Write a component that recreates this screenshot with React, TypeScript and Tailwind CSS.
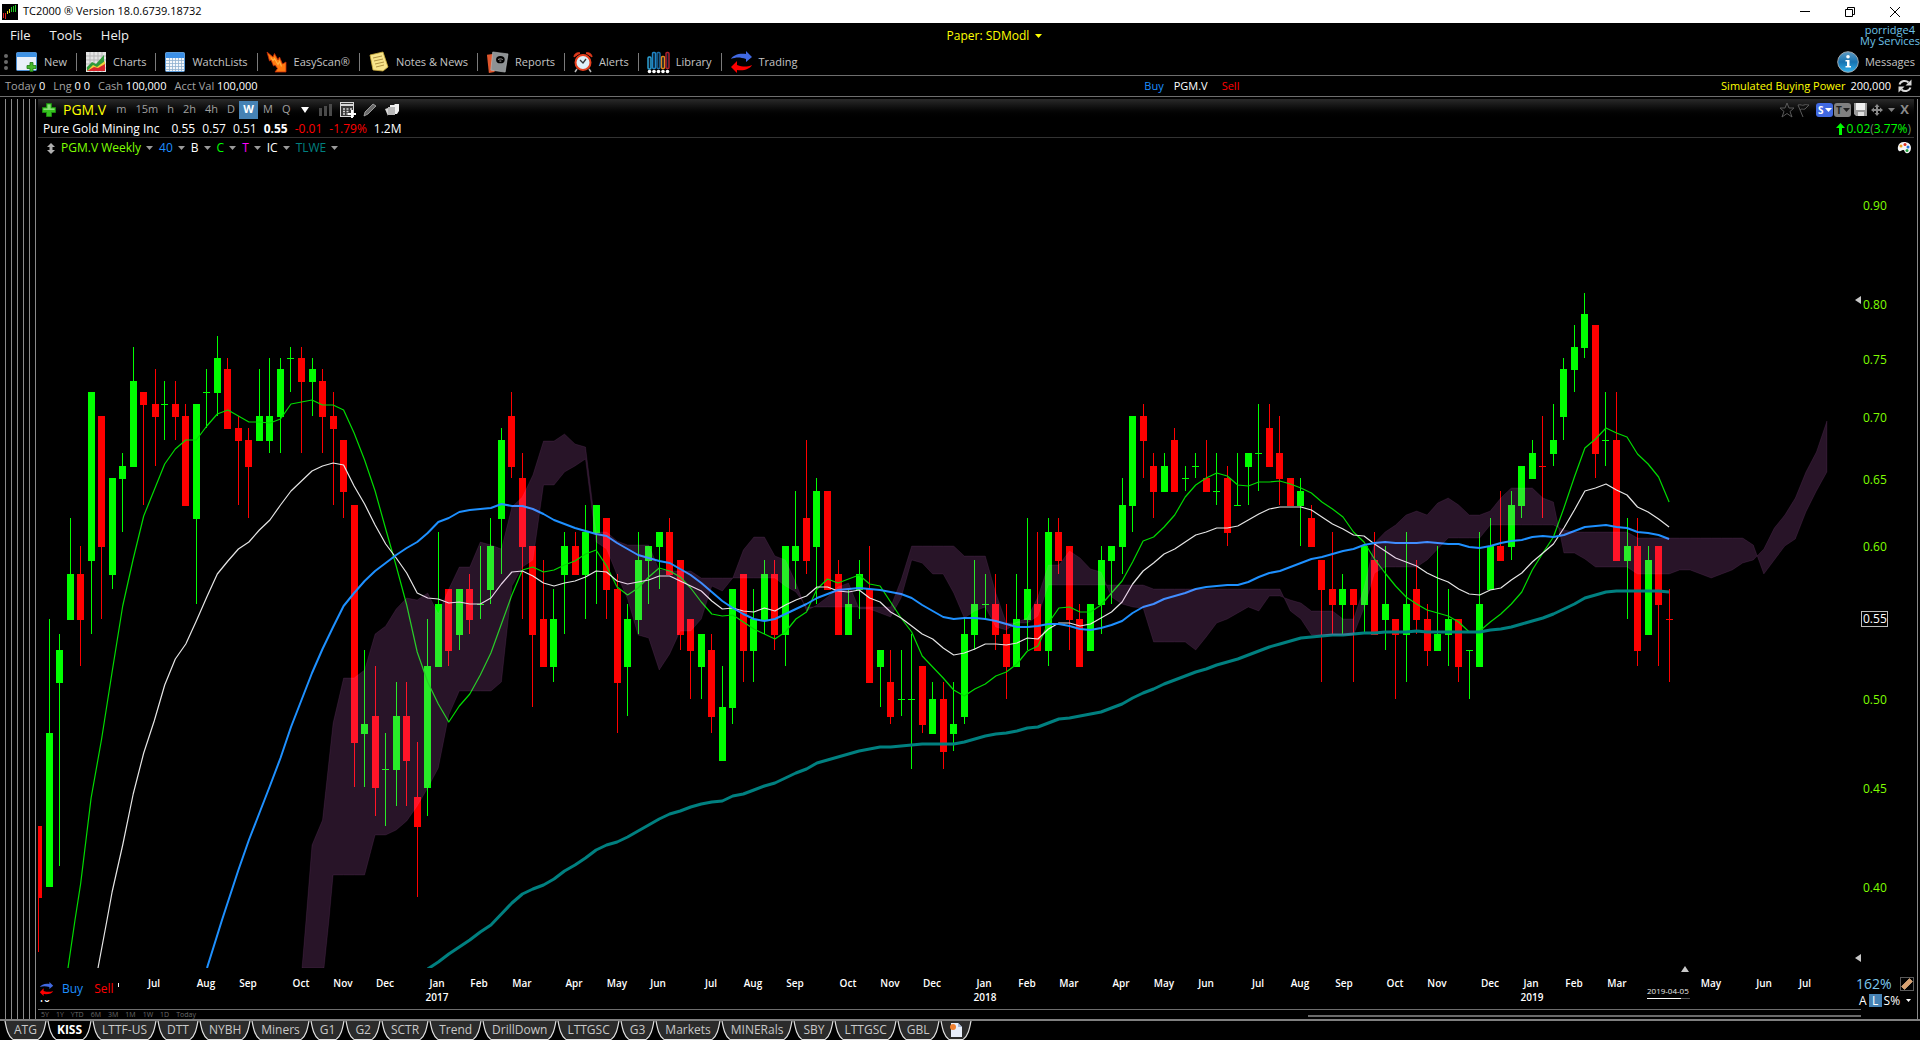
import React from "react";

/* ---------- chart data ---------- */

// One weekly bar per entry: direction (u/d), high, body top, body bottom, low, in cents.
const BARS = `
d 43 43 39.5 37|u 55 48 40 40|u 54 53 51 41|u 62 58 55 55|d 60 58 55 52|u 72 72 59 54|d 70 70 60 55|u 65 65 58 57|u 67 66 65 61|u 76 73 66 66|
d 72 72 71 63|d 74 71 70 66|u 73 71 71 68|d 73 71 70 68|d 71 70 63 63|u 71 71 62 56|u 74 72 72 69|u 77 75 72 70|d 75 74 69 69|d 70 69 68 63|
d 69 68 66 62|u 74 70 68 68|u 75 70 68 67|u 75 74 70 67|u 76 75 75 72|d 76 75 73 67|u 75 74 73 70|d 74 73 70 67|d 72 70 69 63|d 68 68 64 62|
d 63 63 47.5 45|u 53 48.5 48 45|d 52 49 45 43.5|u 48 46 46 43|u 51 49 46 44|d 51 49 46.5 44|d 47.5 44.5 43 39.5|u 55 52 45 43.5|u 61 56 52 52|d 57 57 53 52|
u 57 57 54 53|d 58 57 55 54|u 60 56 56 55|u 62 60 57 56|u 69 68 62 58|d 72 70 66 65|d 67 65 60 55|d 60 60 54 49.5|d 59 55 52 52|u 57 55 52 51|
u 61 60 58 54|d 61 60 58 58|u 63 61 58 55|u 63 63 61 56|d 62 62 57 55|d 58 57 51 48|u 56 55 52 49|u 61 59 55 54|u 60 60 59 56|u 61 61 60 57|
d 62 61 58 58|d 59 59 54 53|d 55 55 53 50|u 54 54 52 50|d 54 53 49 48|u 52 49.5 46.5 46.5|u 57 57 49.5 48.5|d 58 58 53 51|u 57 55 53 51|u 59 58 55 54|
d 59 58 54 53|u 60 60 54 52|u 64 60 59 57|d 68 62 59 58|u 65 64 60 56|d 64 64 57 57|d 59 58 54 54|u 57 56 54 54|u 59 58 57 55|d 60 57 51 51|
u 53 53 52 49.5|d 53 51 49 48.5|u 53 50 50 49|u 54 50 50 46|d 52 52 48.5 48|u 51 50 48 48|d 51 50 47 46|u 51 48.5 48 47|u 55 54 49 48.5|u 59 56 54 53|
u 58 56 56 55|d 58 56 54 53|d 56 54 52 50|u 58 55 52 52|u 62 57 55 53|d 61 56 53 53|u 62 61 53 52|d 62 61 59 58|d 60 60 55 53|d 56 55 52 52|
u 56 56 53 53|u 60 59 56 54|u 60 60 59 56|u 65 63 60 58|u 70 70 63 61|d 71 70 68 65|d 67 66 64 62|u 67 66 64 64|d 69 68 64 64|u 66 65 65 64|
u 67 66 66 65|d 68 65 64 64|u 67 64 64 63|d 66 65 61 60|u 67 63 63 63|u 67 67 66 63|u 71 67 67 64|d 71 69 66 66|d 70 67 65 63|d 65 65 63 63|
u 65 64 63 60|d 63 62 60 60|d 59 59 57 51|d 61 57 56 54|u 58 57 56 54|d 57 57 56 51|u 60 60 56 54|d 61 59 54 54|u 60 56 55 53|d 55 55 54 50|
u 61 56 54 51|d 59 57 55 54|d 56 55 53 52|u 60 54 53 53|u 57 55 54 52|d 55 55 52 51|u 53 53 53 50|u 61 56 52 52|u 62 60 57 57|d 64 60 59 59|
u 64 63 60 59|u 66 66 63 62|u 68 67 65 65|d 70 66 66 62|u 71 68 67 66|u 75 74 70 68|u 78 76 74 72|u 81 79 76 75|d 78 78 67 65|u 72 68 68 66|
d 72 68 59 59|u 62 60 59 55|d 62 60 53 52|u 60 59 54 54|d 60 60 56 52|d 57 55 55 51`
  .replace(/\n/g, "")
  .split("|")
  .map((row) => {
    const [dir, ...p] = row.split(" ");
    return { up: dir === "u", high: +p[0], top: +p[1], bottom: +p[2], low: +p[3] };
  });

const barX = (i: number) => 38.5 + 10.52 * i;
const priceY = (cents: number) => 304.4 + 840.4 * Math.log(80 / cents);

const FAST_START = 4;
const FAST = [
  884, 798, 739, 672, 606, 559, 516, 490, 464, 449, 440, 440, 426, 414, 410, 416, 422, 422, 423, 419, 404, 402, 400, 405, 405, 410,
  433, 460, 491, 529, 566, 605, 652, 682, 704, 722, 706, 694, 675, 653, 624, 595, 570, 567, 572, 570, 565, 561, 554, 550, 566, 587,
  595, 588, 577, 568, 571, 577, 588, 602, 614, 616, 615, 622, 629, 634, 639, 632, 619, 612, 589, 579, 583, 579, 575, 584, 586, 602,
  618, 632, 656, 667, 678, 690, 696, 689, 684, 676, 672, 664, 651, 646, 623, 608, 607, 612, 612, 605, 593, 581, 562, 541, 537, 527,
  515, 497, 485, 478, 473, 476, 485, 486, 482, 482, 481, 484, 488, 493, 502, 509, 517, 532, 542, 559, 573, 586, 597, 604, 610, 613,
  616, 622, 632, 631, 622, 614, 604, 592, 570, 553, 537, 508, 477, 448, 439, 428, 433, 437, 454, 464, 477, 502,
];

const MID_START = 7;
const MID = [
  892, 845, 794, 753, 721, 685, 659, 644, 621, 597, 574, 561, 549, 542, 530, 520, 505, 491, 481, 471, 466, 463, 465, 486, 504, 525,
  544, 558, 573, 593, 598, 599, 603, 602, 604, 604, 598, 584, 572, 571, 576, 583, 586, 583, 581, 577, 571, 572, 581, 584, 582, 580,
  576, 576, 581, 586, 591, 601, 609, 608, 611, 612, 608, 611, 605, 600, 596, 587, 587, 591, 592, 590, 598, 602, 612, 618, 626, 634,
  639, 648, 655, 653, 649, 644, 644, 645, 643, 638, 639, 629, 623, 623, 626, 624, 618, 612, 602, 584, 571, 563, 554, 549, 542, 535,
  532, 528, 528, 526, 520, 514, 509, 507, 507, 507, 510, 517, 524, 529, 535, 536, 544, 551, 558, 562, 566, 573, 578, 582, 589, 594,
  595, 590, 588, 580, 573, 562, 553, 544, 528, 510, 491, 488, 484, 490, 495, 507, 512, 519, 527,
];

const SLOW_START = 19;
const SLOW = [
  870, 840, 813, 786, 758, 727, 700, 673, 649, 627, 606, 593, 581, 571, 563, 555, 548, 542, 533, 522, 518, 512, 510, 509, 508, 504,
  506, 506, 509, 514, 520, 524, 528, 531, 534, 536, 543, 549, 555, 558, 561, 563, 569, 575, 583, 592, 601, 608, 614, 619, 621, 619,
  614, 609, 604, 598, 594, 590, 589, 588, 589, 590, 592, 594, 598, 605, 611, 617, 619, 618, 618, 619, 621, 624, 627, 627, 626, 624,
  624, 626, 629, 630, 628, 625, 621, 613, 607, 604, 599, 596, 593, 589, 587, 586, 585, 585, 582, 577, 573, 571, 567, 563, 559, 557,
  554, 551, 549, 545, 543, 542, 543, 543, 543, 542, 543, 544, 544, 547, 548, 546, 543, 541, 540, 537, 536, 537, 535, 531, 527, 526,
  525, 527, 528, 532, 533, 535, 539,
];

const LONG_START = 37;
const LONG = [
  969, 962, 954, 947, 940, 932, 925, 914, 903, 894, 889, 885, 879, 871, 865, 858, 850, 845, 842, 837, 831, 825, 819, 814, 811, 807,
  804, 802, 801, 796, 794, 790, 786, 783, 778, 773, 769, 763, 760, 757, 754, 751, 749, 747, 747, 746, 745, 744, 744, 744, 744, 742,
  739, 736, 734, 733, 731, 728, 727, 723, 719, 718, 716, 714, 712, 708, 704, 698, 693, 689, 684, 680, 676, 672, 669, 665, 662, 659,
  655, 651, 647, 644, 641, 638, 637, 636, 635, 635, 634, 633, 633, 632, 632, 632, 631, 632, 632, 632, 632, 632, 632, 630, 629, 627,
  624, 621, 618, 614, 609, 604, 598, 595, 592, 591, 591, 591, 591, 591, 592,
];

const SPAN_START = 26;
const SPAN_A = [
  845, 820, 723, 678, 678, 670, 634, 626, 609, 598, 600, 593, 614, 589, 567, 567, 542, 545, 549, 507, 497, 475, 441, 441, 434, 444,
  447, 532, 532, 541, 545, 545, 545, 570, 571, 571, 571, 578, 578, 578, 578, 550, 537, 537, 556, 560, 583, 611, 605, 597, 587, 583,
  609, 609, 613, 617, 598, 560, 563, 574, 574, 593, 618, 611, 607, 627, 630, 622, 618, 597, 565, 565, 551, 558, 569, 572, 597, 604,
  607, 608, 642, 642, 642, 642, 650, 637, 623, 619, 613, 607, 611, 596, 596, 600, 603, 611, 611, 611, 619, 619, 588, 543, 532, 525,
  515, 511, 515, 503, 498, 505, 515, 515, 511, 498, 488, 488, 488, 498, 502, 553, 553, 559, 567, 567, 567, 567, 574, 574, 574, 574,
  570, 570, 574, 578, 574, 570, 563, 560, 549, 528, 515, 498, 472, 452, 421,
];
const SPAN_B = [
  1010, 955, 875, 875, 875, 875, 835, 835, 830, 821, 806, 788, 768, 715, 691, 691, 691, 691, 682, 586, 567, 560, 485, 485, 472, 466,
  459, 542, 549, 575, 599, 635, 638, 670, 654, 631, 631, 619, 586, 591, 578, 578, 578, 578, 578, 586, 592, 607, 607, 607, 607, 607,
  607, 607, 607, 607, 580, 546, 546, 546, 546, 546, 556, 556, 556, 593, 623, 623, 623, 616, 585, 585, 585, 585, 585, 585, 585, 585,
  585, 585, 589, 589, 589, 589, 589, 589, 589, 589, 589, 589, 589, 589, 589, 611, 619, 635, 635, 635, 635, 635, 608, 573, 567, 567,
  567, 567, 560, 549, 538, 538, 538, 538, 525, 525, 525, 525, 525, 525, 525, 530, 532, 532, 532, 532, 532, 532, 538, 538, 538, 538,
  538, 538, 538, 538, 538, 538, 538, 545, 574, 560, 546, 539, 512, 491, 472,
];

const toPoints = (start: number, ys: number[]) => ys.map((y, k) => `${barX(start + k).toFixed(1)},${y}`);

const MONTHS: [string, number][] = [
  ["Jul", 154], ["Aug", 206], ["Sep", 248], ["Oct", 301], ["Nov", 343], ["Dec", 385], ["Jan", 437], ["Feb", 479], ["Mar", 522],
  ["Apr", 574], ["May", 617], ["Jun", 658], ["Jul", 711], ["Aug", 753], ["Sep", 795], ["Oct", 848], ["Nov", 890], ["Dec", 932],
  ["Jan", 984], ["Feb", 1027], ["Mar", 1069], ["Apr", 1121], ["May", 1164], ["Jun", 1206], ["Jul", 1258], ["Aug", 1300],
  ["Sep", 1344], ["Oct", 1395], ["Nov", 1437], ["Dec", 1490], ["Jan", 1531], ["Feb", 1574], ["Mar", 1617], ["May", 1711],
  ["Jun", 1764], ["Jul", 1805],
];
const YEARS: [string, number][] = [["2017", 437], ["2018", 985], ["2019", 1532]];
const PRICES = [90, 80, 75, 70, 65, 60, 50, 45, 40];

function PriceChart() {
  const cloud = [...toPoints(SPAN_START, SPAN_A), ...toPoints(SPAN_START, SPAN_B).reverse()].join(" ");
  return (
    <svg
      viewBox="38 158 1876 851"
      preserveAspectRatio="none"
      className="absolute inset-0 h-full w-full"
      role="img"
      aria-label="PGM.V weekly candlestick chart"
    >
      <defs>
        <clipPath id="plot">
          <rect x="38" y="158" width="1820" height="810" />
        </clipPath>
        <clipPath id="cut-year">
          <rect x="38" y="1000" width="30" height="6" />
        </clipPath>
      </defs>
      <g clipPath="url(#plot)">
        <g shapeRendering="crispEdges">
          {BARS.map((b, i) => {
            const x = i === 11 ? 155 : Math.floor(barX(i));
            const high = Math.floor(priceY(b.high));
            const low = Math.floor(priceY(b.low));
            const top = Math.floor(priceY(b.top));
            const bottom = Math.floor(priceY(b.bottom)) + 1;
            return (
              <g key={i} fill={b.up ? "#00ff00" : "#ff0000"}>
                <rect x={x} y={high} width={1} height={low - high} />
                <rect x={x - 3} y={top} width={7} height={bottom - top} />
              </g>
            );
          })}
        </g>
        <g fill="none" strokeLinejoin="round">
          <polyline points={["68,968", "75,920", ...toPoints(FAST_START, FAST)].join(" ")} stroke="#00dc00" strokeWidth="1.2" />
          <polyline points={["98,968", "107,920", ...toPoints(MID_START, MID)].join(" ")} stroke="#e6e6e6" strokeWidth="1.2" />
          <polyline points={["207,968", "222,920", ...toPoints(SLOW_START, SLOW)].join(" ")} stroke="#1e90ff" strokeWidth="2" />
          <polyline points={toPoints(LONG_START, LONG).join(" ")} stroke="#008080" strokeWidth="3" />
        </g>
        <polygon
          points={`302,968 306,920 ${cloud.split(" ").slice(0, -2).join(" ")} 329,920 324,968`}
          fill="#ff80ff"
          fillOpacity="0.157"
          stroke="#ff80ff"
          strokeOpacity="0.09"
        />
      </g>

      <g fill="#ffffff" fontSize="10" fontWeight="600" textAnchor="middle">
        {MONTHS.map(([m, x], i) => (
          <text key={i} x={x} y="987">
            {m}
          </text>
        ))}
        {YEARS.map(([t, x]) => (
          <text key={t} x={x} y="1001">
            {t}
          </text>
        ))}
        <text x="44" y="1002" clipPath="url(#cut-year)">
          16
        </text>
        <rect x="118" y="983" width="1" height="4" />
      </g>
      <g fill="#7fff00" fontSize="12" fontWeight="500">
        {PRICES.map((p) => (
          <text key={p} x="1863" y={Math.round(priceY(p)) + 5}>
            {(p / 100).toFixed(2)}
          </text>
        ))}
      </g>
      <rect x="1861.5" y="611.5" width="26" height="15" fill="#000000" stroke="#bdbdbd" />
      <text x="1863" y="623" fontSize="12" fontWeight="500" fill="#ffffff">
        0.55
      </text>
      <g fill="#c8c8c8">
        <path d="M1855 300l6-4v8z" />
        <path d="M1855 958l6-4v8z" />
        <path d="M1685 966l4 6h-8z" />
      </g>
      <text x="1647" y="994" fontSize="8" fill="#e8e8e8">
        2019-04-05
      </text>
      <g shapeRendering="crispEdges">
        <rect x="1647" y="998" width="43" height="1" fill="#555555" />
        <rect x="1647" y="998" width="34" height="1" fill="#ffffff" />
      </g>
    </svg>
  );
}

/* ---------- icons ---------- */

const icon = "h-[22px] w-[22px] shrink-0";

const NewIcon = () => (
  <svg viewBox="0 0 22 22" className={icon}>
    <rect x="0.5" y="1.5" width="20" height="18" rx="1" fill="#e9f0fa" stroke="#4a8fd6" />
    <rect x="1" y="2" width="19" height="4" fill="#3f92e4" />
    <path d="M14 11.500h3v3h3v3h-3v3h-3v-3h-3v-3h3z" fill="#46b92c" stroke="#1c7a12" strokeWidth="0.8" />
  </svg>
);
const ChartsIcon = () => (
  <svg viewBox="0 0 22 22" className={icon}>
    <rect x="1" y="1" width="20" height="20" fill="#e4e4e4" />
    <path d="M1 5h20M1 9h20M1 13h20M1 17h20M5 1v20M9 1v20M13 1v20M17 1v20" stroke="#b5b5b5" />
    <path d="M2 20v-4l5-5 4 2 8-9v16z" fill="#2f9a3a" />
    <path d="M2 20l6-6 4 2 8-6v10z" fill="#f2d03a" />
    <path d="M2 20l7-4 4 1 7-4v7z" fill="#d8242a" />
  </svg>
);
const WatchIcon = () => (
  <svg viewBox="0 0 22 22" className={icon}>
    <rect x="1.500" y="1.500" width="19" height="19" rx="1" fill="#f4f7fb" stroke="#5b9bd9" />
    <rect x="2" y="2" width="18" height="5" fill="#3b8fe6" />
    <path d="M2 9.500h18M2 12.500h18M2 15.500h18M2 18.500h18M5.500 7v13M8.500 7v13M11.500 7v13M14.500 7v13M17.500 7v13" stroke="#8fb0cf" strokeWidth="0.8" />
  </svg>
);
const ScanIcon = () => (
  <svg viewBox="0 0 22 22" className={icon}>
    <path d="M1 1l6 5 1.500-3.500L12 9l1.500-3 3 7 3.500-2v10H9l2.500-3.500L9 14l-1.500 1L5 9 3.500 10z" fill="#ff7a10" stroke="#c22a08" strokeWidth="0.8" />
    <path d="M5 6.500l2 3 1.500-2 3.500 6 1.500-3 2 5" stroke="#ffb040" strokeWidth="1.200" fill="none" />
  </svg>
);
const NotesIcon = () => (
  <svg viewBox="0 0 22 22" className={icon}>
    <path d="M2 4l13-3 5 15-5 4-10-1z" fill="#f7e48a" stroke="#c9a93b" strokeWidth="0.8" />
    <path d="M5 7l9-2M6 10l9-2M7 13l9-2M8 16l8-2" stroke="#a8893a" strokeWidth="0.9" />
  </svg>
);
const ReportsIcon = () => (
  <svg viewBox="0 0 24 24" className="h-[23px] w-[23px] shrink-0">
    <path d="M1 4l6-1 2 19-6 1z" fill="#e0562c" />
    <path d="M7 1l16 2-3 19-15-2z" fill="#8e9294" stroke="#c0c4c6" strokeWidth="0.6" />
    <ellipse cx="15" cy="9" rx="4.500" ry="3.800" fill="#000000" />
    <path d="M12.500 9c1-1 4-1 5 0M14 10.500h2" stroke="#c8c8c8" strokeWidth="0.8" fill="none" />
  </svg>
);
const AlertsIcon = () => (
  <svg viewBox="0 0 20 22" className="h-[22px] w-[20px] shrink-0">
    <path d="M1 6c0-3 3-5 6-4zM19 6c0-3-3-5-6-4z" fill="#e23a1c" stroke="#e23a1c" />
    <path d="M4 18l-2 3M16 18l2 3" stroke="#bcbcbc" strokeWidth="1.500" />
    <circle cx="10" cy="11.500" r="7.500" fill="#dff0f8" stroke="#e8401e" strokeWidth="2" />
    <path d="M7 9l3 3 3-4" stroke="#333333" strokeWidth="1.300" fill="none" />
  </svg>
);
const LibraryIcon = () => (
  <svg viewBox="0 0 23 23" className="h-[23px] w-[23px] shrink-0">
    <g fill="#0b1c2c" strokeWidth="1.400">
      <rect x="1" y="6" width="3" height="12" rx="1" stroke="#2fa8dc" />
      <rect x="5.500" y="1.500" width="3" height="16" rx="1" stroke="#1f86c8" />
      <rect x="10" y="1.500" width="3" height="16" rx="1" stroke="#1b6ea8" />
      <rect x="14.500" y="5.500" width="3" height="12" rx="1" stroke="#e08a1c" />
      <rect x="19" y="1.500" width="3" height="16" rx="1" stroke="#b3202c" />
    </g>
    <g fill="#ffffff">
      <circle cx="2.500" cy="20.500" r="1.800" />
      <circle cx="7" cy="20.500" r="1.800" />
      <circle cx="11.500" cy="20.500" r="1.800" />
      <circle cx="16" cy="20.500" r="1.800" />
      <circle cx="20.500" cy="20.500" r="1.800" />
    </g>
  </svg>
);
const TradeIcon = ({ className }: { className: string }) => (
  <svg viewBox="0 0 23 22" className={className}>
    <path d="M1 8c2-4 8-6 15-5v-3l6 6-6 5v-3c-6-2-10-2-15 0z" fill="#4169e1" />
    <path d="M22 14c-2 4-8 6-15 5v3l-6-6 6-6v4c6 2 10 2 15 0z" fill="#ff0000" />
  </svg>
);
const Caret = ({ className = "text-[#9a9a9a]" }: { className?: string }) => (
  <svg viewBox="0 0 7 4" className={`h-1 w-[7px] shrink-0 ${className}`}>
    <path d="M0 0h7L3.500 4z" fill="currentColor" />
  </svg>
);

/* ---------- window chrome ---------- */

function TitleBar() {
  return (
    <header className="flex h-[23px] items-center bg-white pl-[2px] text-[11px] text-black">
      <svg viewBox="0 0 16 16" className="h-4 w-4">
        <rect width="16" height="16" fill="#000000" />
        <path d="M1.500 9v5M3.500 9v6" stroke="#e02020" />
        <path d="M5.500 7v3M7.500 5v4" stroke="#e8d820" />
        <path d="M9.500 3v5M11.500 2v6M13.500 1v7" stroke="#20d020" />
      </svg>
      <h1 className="ml-[5px] flex-1">TC2000 ® Version 18.0.6739.18732</h1>
      <div className="flex h-full pr-[3px]">
        <button aria-label="Minimize" className="flex w-[45px] items-center justify-center">
          <svg viewBox="0 0 10 10" className="h-[10px] w-[10px]"><path d="M0 4.500h10" stroke="#000000" /></svg>
        </button>
        <button aria-label="Restore" className="flex w-[45px] items-center justify-center">
          <svg viewBox="0 0 10 10" className="h-[10px] w-[10px]">
            <path d="M0.500 2.500h7v7h-7zM2.500 2.500v-2h7v7h-2" stroke="#000000" fill="none" />
          </svg>
        </button>
        <button aria-label="Close" className="flex w-[45px] items-center justify-center">
          <svg viewBox="0 0 10 10" className="h-[10px] w-[10px]"><path d="M0 0l10 10M10 0L0 10" stroke="#000000" /></svg>
        </button>
      </div>
    </header>
  );
}

function MenuBar() {
  return (
    <nav className="flex h-[26px] shrink-0 text-[12px] text-[#f0f0f0]">
      <div className="flex w-[49.3%] items-center gap-[19px] pl-[10px] text-[13px]">
        <button>File</button>
        <button>Tools</button>
        <button>Help</button>
      </div>
      <button className="flex items-center gap-[6px] text-[#ffff00]">
        Paper: SDModl
        <Caret className="text-[#ffff00]" />
      </button>
      <div className="ml-auto flex flex-col items-end pt-[1px] text-[11px] leading-[11px] text-[#6fc3e8]">
        <a href="#account" className="pr-[5px]">porridge4</a>
        <a href="#services">My Services</a>
      </div>
    </nav>
  );
}

const TOOLS: [string, React.ReactNode][] = [
  ["New", <NewIcon />],
  ["Charts", <ChartsIcon />],
  ["WatchLists", <WatchIcon />],
  ["EasyScan®", <ScanIcon />],
  ["Notes & News", <NotesIcon />],
  ["Reports", <ReportsIcon />],
  ["Alerts", <AlertsIcon />],
  ["Library", <LibraryIcon />],
  ["Trading", <TradeIcon className="h-[22px] w-[23px] shrink-0" />],
];

function Toolbar() {
  return (
    <div className="flex h-[27px] shrink-0 items-center border-b border-[#6e6e6e] text-[11px] text-[#c4c4c4]">
      <div className="flex flex-col gap-[2px] pl-1">
        <i className="h-1 w-1 rounded-full bg-[#6a6a6a]" />
        <i className="h-1 w-1 rounded-full bg-[#6a6a6a]" />
        <i className="h-1 w-1 rounded-full bg-[#6a6a6a]" />
      </div>
      {TOOLS.map(([name, glyph], i) => (
        <React.Fragment key={name}>
          {i > 0 && <span className="h-[18px] w-px bg-[#7a7a7a]" />}
          <button className="flex items-center gap-[6px] pr-[9px] pl-2">
            {glyph}
            {name}
          </button>
        </React.Fragment>
      ))}
      <button className="ml-auto flex items-center gap-[6px] pr-[5px]">
        <svg viewBox="0 0 22 22" className={icon}>
          <defs>
            <linearGradient id="info" x1="0" x2="0" y1="0" y2="1">
              <stop offset="0" stopColor="#5f9cc4" />
              <stop offset="0.5" stopColor="#1672b0" />
              <stop offset="1" stopColor="#35b4ee" />
            </linearGradient>
          </defs>
          <circle cx="11" cy="11" r="10.300" fill="url(#info)" stroke="#9fa8ae" />
          <circle cx="11" cy="5.800" r="1.800" fill="#ffffff" />
          <path d="M8.500 9h4v6h1.500v1.500H8.500V15H10v-4.500H8.500z" fill="#ffffff" />
        </svg>
        Messages
      </button>
    </div>
  );
}

function AccountBar() {
  return (
    <div className="flex h-[21px] shrink-0 items-center border-b border-[#6e6e6e] text-[11px] text-[#a4a4a4]">
      <div className="flex w-[59.6%] gap-2 pl-[5px]">
        <span>Today <b className="font-normal text-white">0</b></span>
        <span>Lng <b className="font-normal text-white">0 0</b></span>
        <span>Cash <b className="font-normal text-white">100,000</b></span>
        <span>Acct Val <b className="font-normal text-white">100,000</b></span>
      </div>
      <button className="text-[#1e90ff]">Buy</button>
      <span className="pr-[14px] pl-[10px] text-white">PGM.V</span>
      <button className="text-[#ff0000]">Sell</button>
      <p className="ml-auto text-[#ffff00]">
        Simulated Buying Power <span className="ml-[2px] text-white">200,000</span>
      </p>
      <button aria-label="Refresh" className="mr-[8px] ml-[7px]">
        <svg viewBox="0 0 14 14" className="h-[14px] w-[14px]" fill="none" stroke="#d8d8d8" strokeWidth="2">
          <path d="M1.500 5.500C3 1.500 8 1 10.500 3.500" />
          <path d="M12.500 8.500C11 12.500 6 13 3.500 10.500" />
          <path d="M13.500 0.500v6h-6zM0.500 13.500v-6h6z" fill="#d8d8d8" stroke="none" />
        </svg>
      </button>
    </div>
  );
}

/* ---------- chart panel ---------- */

const FRAMES = ["m", "15m", "h", "2h", "4h", "D", "W", "M", "Q"];

function SymbolBar() {
  return (
    <div className="flex h-[21px] shrink-0 items-center bg-linear-to-b from-[#2a2a2a] to-black pl-1 text-[11px] text-[#a0a0a0]">
      <button aria-label="Add">
        <svg viewBox="0 0 14 14" className="h-[14px] w-[14px]">
          <path d="M4.500 0.500h5v4h4v5h-4v4h-5v-4h-4v-5h4z" fill="#35c21e" stroke="#1d8a10" />
          <path d="M5.500 1.500h3v4h4v1.500h-11V5.500h4z" fill="#8be07a" />
        </svg>
      </button>
      <span className="mr-[5px] ml-[7px] text-[14px] text-[#ffff00]">PGM.V</span>
      {FRAMES.map((f) => (
        <button
          key={f}
          className={
            f === "W"
              ? "h-[18px] w-[19px] bg-[#4682b4] font-bold text-white"
              : "pr-1 pl-[5px]"
          }
        >
          {f}
        </button>
      ))}
      <svg viewBox="0 0 8 6" className="ml-[7px] h-[6px] w-2"><path d="M0 0h8L4 6z" fill="#ffffff" /></svg>
      <svg viewBox="0 0 14 12" className="ml-[10px] h-3 w-[14px]">
        <path d="M0 4h3v8H0zM5 2h3v10H5zM10 0h3v12h-3z" fill="#4a4a4a" />
      </svg>
      <svg viewBox="0 0 16 16" className="ml-[7px] h-4 w-4">
        <rect x="0.500" y="0.500" width="13" height="14" fill="#3a3a3a" stroke="#d8d8d8" />
        <path d="M1 3h12" stroke="#d8d8d8" strokeWidth="2" />
        <path d="M3 7h2M6.500 7h2M10 7h2M3 9.500h2M6.500 9.500h2M3 12h2M6.500 12h2" stroke="#d8d8d8" strokeWidth="1.500" />
        <path d="M12 8v8M8 12h8" stroke="#ffffff" strokeWidth="2" />
      </svg>
      <svg viewBox="0 0 14 14" className="ml-[7px] h-[14px] w-[14px]">
        <path d="M1 13l1-4 8-8 3 2-8 8z" fill="#6a6a6a" stroke="#b0b0b0" strokeWidth="0.8" />
      </svg>
      <svg viewBox="0 0 15 14" className="ml-2 h-[14px] w-[15px]">
        <path d="M5 2h4l1-1h4v7l-2 3H5z" fill="#f0f0f0" />
        <path d="M3 4h7v8H3z" fill="#b8b8b8" />
        <path d="M0 6l3-1v8z" fill="#d8d8d8" />
      </svg>
      <div className="ml-auto flex items-center pr-[5px]">
        <svg viewBox="0 0 16 16" className="h-4 w-4" fill="none" stroke="#5a5a5a">
          <path d="M8 1l2 5h5l-4 3.500 2 5.500-5-3.500L3 15l2-5.500L1 6h5z" />
        </svg>
        <svg viewBox="0 0 13 14" className="mr-px ml-[2px] h-[14px] w-[13px]" fill="none" stroke="#5a5a5a">
          <path d="M1 2l5 12M1 2c3-1 4 1 6 0s3 0 5 0L8 6c-2 1-3-1-5 1" />
        </svg>
        <button className="ml-[5px] flex h-[14px] w-[17px] items-center justify-center gap-px rounded-[3px] bg-[#4169e1] text-[10px] leading-none font-bold text-white">
          S<Caret className="text-white" />
        </button>
        <button className="ml-[1px] flex h-[14px] w-[17px] items-center justify-center gap-px rounded-[3px] bg-[#808080] text-[10px] leading-none font-bold text-[#202020]">
          T<Caret className="text-[#202020]" />
        </button>
        <svg viewBox="0 0 13 13" className="ml-[3px] h-[13px] w-[13px]">
          <path d="M0 0h13v13H2l-2-2z" fill="#9a9a9a" />
          <path d="M2 0h9v7H2z" fill="#f0f0f0" />
          <path d="M4 9h6v4H4z" fill="#e0e0e0" />
        </svg>
        <svg viewBox="0 0 12 12" className="ml-1 h-3 w-3">
          <path d="M6 0l2.500 3H7v2h2V3.500L12 6 9 8.500V7H7v2h1.500L6 12 3.500 9H5V7H3v1.500L0 6l3-2.500V5h2V3H3.500z" fill="#8a8a8a" />
        </svg>
        <Caret className="ml-[5px] text-[#808080]" />
        <button className="ml-[5px] text-[13px] leading-none font-bold text-[#8a8a8a]">X</button>
      </div>
    </div>
  );
}

const STUDIES: [string, string][] = [
  ["PGM.V Weekly", "text-[#7fff00]"],
  ["40", "text-[#1e90ff]"],
  ["B", "text-white"],
  ["C", "text-[#00ff00]"],
  ["T", "text-[#ff00ff]"],
  ["IC", "text-white"],
  ["TLWE", "text-[#008080]"],
];

function ChartPanel() {
  return (
    <main className="mr-[2px] ml-[2px] flex flex-1 flex-col border-r border-[#8a8a8a] pr-[3px]">
      <SymbolBar />
      <div className="flex h-[18px] shrink-0 items-center gap-[7px] border-b border-[#333333] pl-[5px] text-[12px] text-white">
        <h2 className="pr-[5px]">Pure Gold Mining Inc</h2>
        <span>0.55</span>
        <span>0.57</span>
        <span>0.51</span>
        <b>0.55</b>
        <span className="text-[#ff0000]">-0.01</span>
        <span className="text-[#ff0000]">-1.79%</span>
        <span>1.2M</span>
        <span className="ml-auto flex items-center pr-[3px] text-[#00ff00]">
          <svg viewBox="0 0 9 12" className="mr-[2px] h-3 w-[9px]"><path d="M4.500 0L9 5H6v7H3V5H0z" fill="#00ff00" /></svg>
          0.02<i className="text-[#6a8a6a] not-italic">(</i>3.77%<i className="text-[#6a8a6a] not-italic">)</i>
        </span>
      </div>
      <div className="flex h-5 shrink-0 items-center pl-[9px] text-[12px]">
        <svg viewBox="0 0 8 11" className="mr-[6px] h-[11px] w-2"><path d="M4 0l4 4H5.500v3H8l-4 4-4-4h2.500V4H0z" fill="#b0b0b0" /></svg>
        {STUDIES.map(([name, tint]) => (
          <button key={name} className={`mr-[6px] flex items-center gap-[5px] ${tint}`}>
            {name}
            <Caret />
          </button>
        ))}
        <svg viewBox="0 0 14 12" className="mr-[3px] ml-auto h-3 w-[14px]">
          <path d="M7 0c4 0 7 2 7 6s-3 6-5 5-1-3-3-3-2 2-4 1-2-9 5-9z" fill="#f4f4f4" />
          <circle cx="4" cy="4" r="1.500" fill="#e8a020" />
          <circle cx="8" cy="2.500" r="1.500" fill="#e03020" />
          <circle cx="11" cy="5" r="1.500" fill="#2070d8" />
          <circle cx="10" cy="8.500" r="1.500" fill="#20a040" />
        </svg>
      </div>

      <div className="relative flex-1">
        <PriceChart />
        <div className="absolute bottom-3 left-[1px] flex items-center text-[12px] leading-4">
          <TradeIcon className="h-[14px] w-[15px]" />
          <button className="ml-2 text-[#1e90ff]">Buy</button>
          <button className="ml-[11px] text-[#ff0000]">Sell</button>
        </div>
        <div className="absolute right-0 bottom-[1px] w-[58px]">
          <div className="flex items-center justify-between text-[14px] leading-4 text-[#7cc8ee]">
            162%
            <button aria-label="Draw" className="h-[14px] w-[14px] border border-[#5a5a5a]">
              <svg viewBox="0 0 12 12" className="h-3 w-3"><path d="M0.500 8.500l8-8 3 3-8 8z" fill="#d8a070" stroke="#f0c8a0" strokeWidth="0.6" /></svg>
            </button>
          </div>
          <div className="flex h-4 items-center pl-[3px] text-[12px] leading-[13px] text-white">
            <button>A</button>
            <button className="mx-[2px] w-[13px] bg-[#4682b4]">L</button>
            <button>S%</button>
            <svg viewBox="0 0 5 3" className="ml-[6px] h-[3px] w-[5px]"><path d="M0 0h5L2.500 3z" fill="#ffffff" /></svg>
          </div>
        </div>
      </div>

      <div className="flex h-[10px] shrink-0">
        <div className="flex flex-1 justify-between border-t border-[#6e6e6e] pl-[3px]">
          <div className="flex gap-[7px] text-[7px] leading-[9px] text-[#6a6a6a]">
            {["5Y", "1Y", "YTD", "6M", "3M", "1M", "1W", "1D", "Today"].map((r) => (
              <button key={r}>{r}</button>
            ))}
          </div>
          <div className="mt-[5px] h-[2px] w-[30.4%] bg-[#6a6a6a]" />
        </div>
        <div className="w-[53px]" />
      </div>
    </main>
  );
}

/* ---------- workspace tabs ---------- */

const TABS = [
  "ATG", "KISS", "LTTF-US", "DTT", "NYBH", "Miners", "G1", "G2", "SCTR", "Trend", "DrillDown", "LTTGSC", "G3", "Markets",
  "MINERals", "SBY", "LTTGSC", "GBL",
];

function Tab({ active, children }: { active?: boolean; children: React.ReactNode }) {
  const fill = active ? "#000000" : "#2b2b2b";
  return (
    <button className={active ? "flex font-bold text-white" : "flex text-[#c8c8c8]"}>
      <svg viewBox="0 0 9 19" className="h-[19px] w-[9px]">
        <path d="M1 0C2.500 8 4 15 9 18.500V0z" fill={fill} />
        <path d="M1 0C2.500 8 4 15 9 18.500" fill="none" stroke="#e0e0e0" strokeWidth="1.200" />
      </svg>
      <span className={active ? "h-[19px] border-b border-[#e0e0e0] px-[1px] leading-[17px]" : "h-[19px] border-b border-[#e0e0e0] bg-[#2b2b2b] px-[1px] leading-[17px]"}>
        {children}
      </span>
      <svg viewBox="0 0 9 19" className="h-[19px] w-[9px]">
        <path d="M8 0C6.500 8 5 15 0 18.500V0z" fill={fill} />
        <path d="M8 0C6.500 8 5 15 0 18.500" fill="none" stroke="#e0e0e0" strokeWidth="1.200" />
      </svg>
    </button>
  );
}

function WorkspaceTabs() {
  return (
    <footer className="flex h-[21px] shrink-0 border-t-2 border-[#808080] pl-1 text-[12px]">
      {TABS.map((t, i) => (
        <Tab key={i} active={t === "KISS"}>
          {t}
        </Tab>
      ))}
      <Tab>
        <svg viewBox="0 0 12 14" className="mt-[2px] h-[14px] w-3">
          <path d="M1 0h7l4 4v10H1z" fill="#e8eefa" />
          <path d="M8 0l4 4H8z" fill="#a8b8d8" />
          <circle cx="3" cy="4" r="3" fill="#f08030" />
        </svg>
      </Tab>
    </footer>
  );
}

export default function App() {
  return (
    <div className="flex min-h-screen flex-col bg-black font-['Open_Sans','Noto_Sans',sans-serif]">
      <TitleBar />
      <MenuBar />
      <Toolbar />
      <AccountBar />
      <div className="mt-[2px] flex flex-1">
        {[0, 1, 2, 3, 4, 5].map((n) => (
          <div key={n} className="w-[6px] border-r border-[#8a8a8a]" />
        ))}
        <ChartPanel />
      </div>
      <WorkspaceTabs />
    </div>
  );
}
